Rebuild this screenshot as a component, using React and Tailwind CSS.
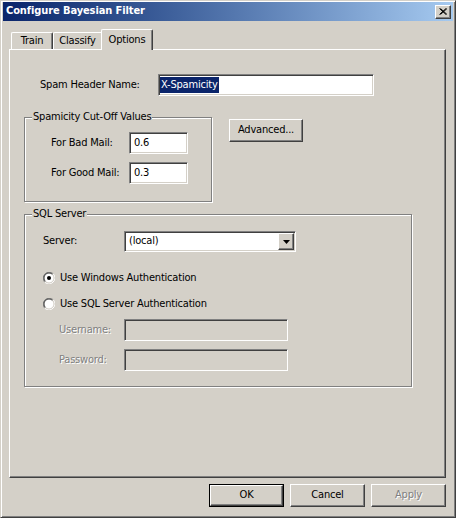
import React from 'react';

const sunken =
  'border border-t-[#808080] border-l-[#808080] border-b-white border-r-white shadow-[inset_1px_1px_0_#404040,inset_-1px_-1px_0_#d4d0c8]';
const raised =
  'border border-t-white border-l-white border-b-[#404040] border-r-[#404040] shadow-[inset_-1px_-1px_0_#808080]';
const etched = 'border border-[#808080] shadow-[inset_1px_1px_0_#fff,1px_1px_0_#fff]';
const disabledText = 'text-[#808080] [text-shadow:1px_1px_0_#fff]';

const Radio = ({ checked }) => (
  <svg width="12" height="12" viewBox="0 0 12 12" className="shrink-0">
    <circle cx="6" cy="6" r="5" fill="#fff" />
    <path d="M1.76 10.24 A6 6 0 0 1 10.24 1.76" stroke="#808080" strokeWidth="1" fill="none" />
    <path d="M10.24 1.76 A6 6 0 0 1 1.76 10.24" stroke="#fff" strokeWidth="1" fill="none" />
    <path d="M2.46 9.54 A5 5 0 0 1 9.54 2.46" stroke="#404040" strokeWidth="1" fill="none" />
    <path d="M9.54 2.46 A5 5 0 0 1 2.46 9.54" stroke="#d4d0c8" strokeWidth="1" fill="none" />
    {checked && <circle cx="6" cy="6" r="2" fill="#000" />}
  </svg>
);

const GroupBox = ({ title, className, children }) => (
  <div className={`relative ${etched} ${className}`}>
    {/* legend sits on the top line */}
    <span className="absolute left-[7px] -top-[8px] bg-[#d4d0c8] px-[1px] leading-[14px]">{title}</span>
    {children}
  </div>
);

const Button = ({ children, disabled, isDefault }) => {
  if (isDefault) {
    return (
      <div className="w-[75px] h-[23px] border border-black flex">
        <div className={`flex-1 ${raised} flex items-center justify-center`}>{children}</div>
      </div>
    );
  }
  return (
    <div className={`w-[75px] h-[23px] ${raised} flex items-center justify-center ${disabled ? disabledText : ''}`}>
      {children}
    </div>
  );
};

const App = () => {
  return (
    <div
      className="w-[456px] h-[518px] bg-[#d4d0c8] border border-t-[#d4d0c8] border-l-[#d4d0c8] border-r-[#404040] border-b-[#404040] shadow-[inset_1px_1px_0_#fff,inset_-1px_-1px_0_#808080] pt-[1px] px-[2px] flex flex-col text-[11px] text-black font-['DejaVu_Sans_Condensed','DejaVu_Sans',sans-serif] tracking-[-0.2px] overflow-hidden"
    >
      {/* title bar */}
      <div className="h-[19px] flex items-center justify-between pl-[3px] pr-[2px] bg-linear-to-r from-[#0a246a] to-[#a6caf0]">
        <span className="text-white font-bold text-[11px] tracking-[-0.1px]">Configure Bayesian Filter</span>
        <div className={`w-[16px] h-[14px] ${raised} bg-[#d4d0c8] flex items-center justify-center`}>
          <svg width="8" height="7" viewBox="0 0 8 7">
            <path d="M0.5 0.5 L7 6.5 M1.5 0.5 L8 6.5 M7 0.5 L0.5 6.5 M8 0.5 L1.5 6.5" stroke="#000" strokeWidth="1" />
          </svg>
        </div>
      </div>

      <div className="pl-[6px] flex flex-col">
        {/* tabs */}
        <div className="mt-[8px] pl-[2px] flex items-end h-[20px]">
          <div className="w-[42px] h-[17px] border-t border-l border-white border-r border-r-[#404040] shadow-[inset_-1px_0_0_#808080] rounded-tl-[2px] rounded-tr-[2px] flex items-center justify-center pt-[1px]">
            Train
          </div>
          <div className="w-[48px] h-[17px] border-t border-l border-white rounded-tl-[2px] flex items-center justify-center pt-[1px]">
            Classify
          </div>
          <div className="relative z-10 -mb-[1px] w-[52px] h-[21px] bg-[#d4d0c8] border-t border-l border-white border-r border-r-[#404040] shadow-[inset_-1px_0_0_#808080] rounded-tl-[2px] rounded-tr-[2px] flex items-start justify-center pt-[2px]">
            Options
          </div>
        </div>

        {/* tab panel */}
        <div className={`w-[437px] h-[429px] ${raised} flex flex-col`}>
          <div className="mt-[24px] flex items-center">
            <span className="ml-[30px] w-[118px]">Spam Header Name:</span>
            <div className={`w-[216px] h-[22px] bg-white ${sunken} flex items-center pl-[1px]`}>
              <span className="bg-[#0a246a] text-white px-[1px] leading-[16px]">X-Spamicity</span>
            </div>
          </div>

          <div className="mt-[21px] flex items-start">
            <GroupBox title="Spamicity Cut-Off Values" className="ml-[14px] w-[188px] h-[85px]">
              <div className="pt-[14px] flex flex-col gap-[8px]">
                <div className="flex items-center">
                  <span className="ml-[26px] w-[78px]">For Bad Mail:</span>
                  <div className={`w-[59px] h-[22px] bg-white ${sunken} flex items-center pl-[4px]`}>0.6</div>
                </div>
                <div className="flex items-center">
                  <span className="ml-[26px] w-[78px]">For Good Mail:</span>
                  <div className={`w-[59px] h-[22px] bg-white ${sunken} flex items-center pl-[4px]`}>0.3</div>
                </div>
              </div>
            </GroupBox>
            <div className={`ml-[17px] mt-[2px] w-[74px] h-[23px] ${raised} flex items-center justify-center`}>
              Advanced...
            </div>
          </div>

          <GroupBox title="SQL Server" className="mt-[12px] ml-[14px] w-[388px] h-[173px]">
            <div className="pt-[16px] flex items-center">
              <span className="ml-[18px] w-[81px]">Server:</span>
              <div className={`w-[172px] h-[21px] bg-white ${sunken} flex items-center justify-between pl-[4px] pr-[1px]`}>
                <span>(local)</span>
                <div className={`w-[16px] h-[17px] bg-[#d4d0c8] ${raised} flex items-center justify-center`}>
                  <svg width="7" height="4" viewBox="0 0 7 4">
                    <path d="M0 0 H7 L3.5 4 Z" fill="#000" />
                  </svg>
                </div>
              </div>
            </div>

            <div className="mt-[20px] ml-[18px] flex items-center gap-[5px] h-[12px]">
              <Radio checked />
              <span>Use Windows Authentication</span>
            </div>
            <div className="mt-[14px] ml-[18px] flex items-center gap-[5px] h-[12px]">
              <Radio />
              <span>Use SQL Server Authentication</span>
            </div>

            <div className="mt-[9px] flex items-center">
              <span className={`ml-[34px] w-[65px] ${disabledText}`}>Username:</span>
              <div className={`w-[164px] h-[22px] ${sunken}`} />
            </div>
            <div className="mt-[8px] flex items-center">
              <span className={`ml-[34px] w-[65px] ${disabledText}`}>Password:</span>
              <div className={`w-[164px] h-[22px] ${sunken}`} />
            </div>
          </GroupBox>
        </div>

        {/* dialog buttons */}
        <div className="mt-[6px] w-[437px] flex justify-end gap-[6px]">
          <Button isDefault>OK</Button>
          <Button>Cancel</Button>
          <Button disabled>Apply</Button>
        </div>
      </div>
    </div>
  );
};

export default App;
